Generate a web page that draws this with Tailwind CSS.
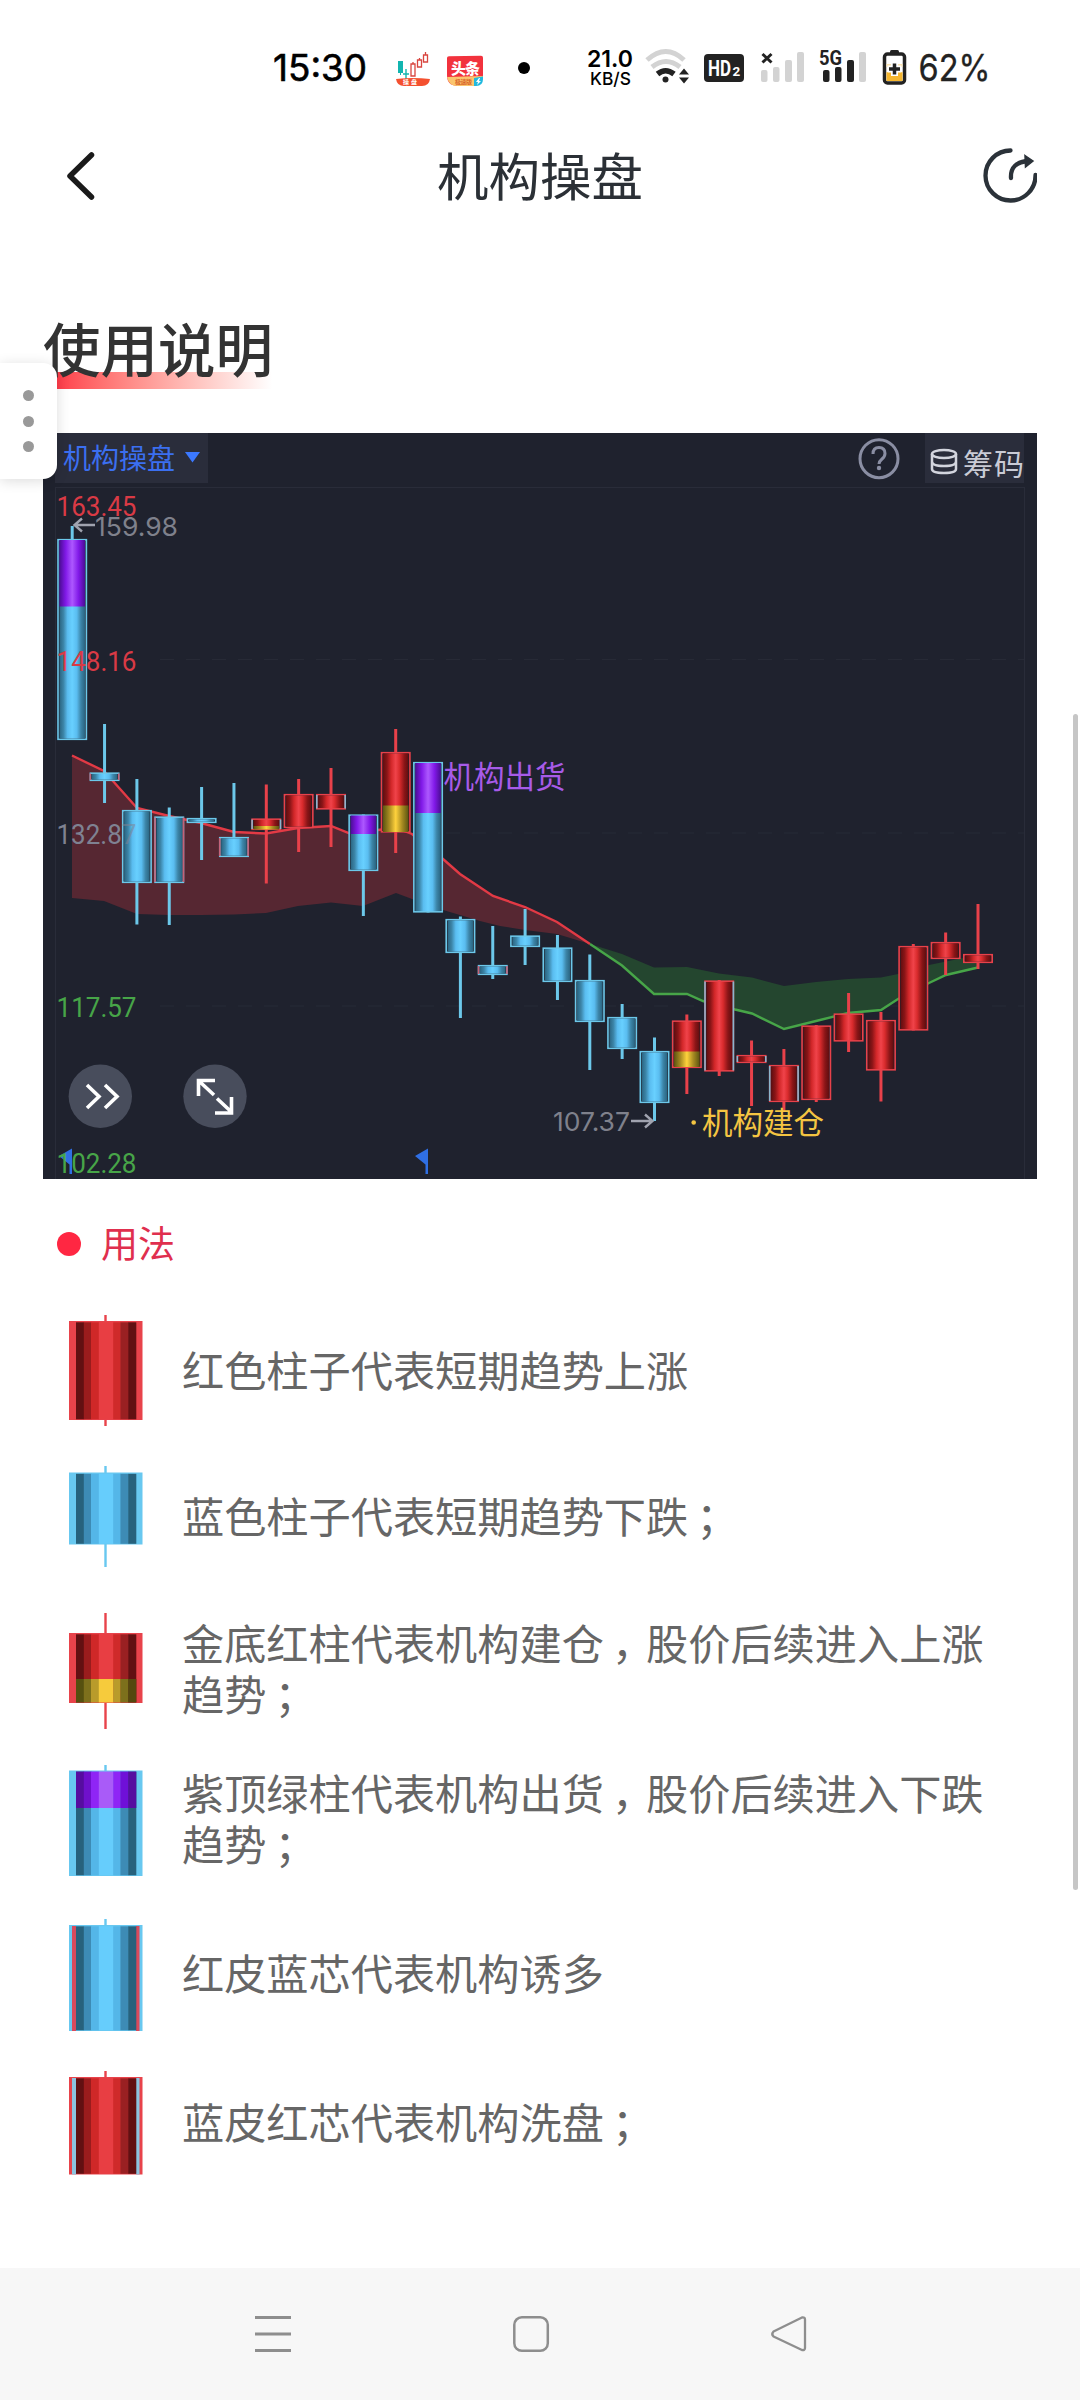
<!DOCTYPE html>
<html lang="zh-CN">
<head>
<meta charset="utf-8">
<title>机构操盘</title>
<script src="https://cdn.jsdelivr.net/npm/@tailwindcss/browser@4"></script>
</head>
<body class="bg-white">
<div class="relative flex h-[2400px] w-[1080px] flex-col overflow-hidden bg-white font-['Noto_Sans_CJK_SC',sans-serif]">

  <!-- status bar -->
  <div class="flex h-[130px] pl-[260px]">
    <svg class="h-[130px] w-[120px]" viewBox="260 0 120 130"><text x="273" y="81" font-family="Inter" font-weight="400" stroke="#000" stroke-width=".6" font-size="37" textLength="94" lengthAdjust="spacingAndGlyphs">15:30</text></svg>
    <svg class="h-[130px] w-[60px]" viewBox="380 0 60 130" fill="none">
      <path d="M398 61h5v12h-2v2h-1v-2h-2z" fill="#12b5b0"/>
      <path d="M406 69v11M403 74h6" stroke="#12b5b0" stroke-width="1.4"/>
      <path d="M411 64h4v12h-4zM413 62v2M417.500 60h4v7h-4zM419.500 58v2M423.500 55h4v7h-4zM425.500 52v3" stroke="#d9453f" stroke-width="1.3"/>
      <path d="M396 79q17-2 34 0q-1 7-8 7h-18q-7 0-8-7z" fill="#f4502f"/>
      <text x="403" y="84" font-size="6" font-weight="700" fill="#fff" textLength="14">操盘</text>
    </svg>
    <svg class="h-[130px] w-[60px]" viewBox="440 0 60 130">
      <path d="M447 58q0-1.500 2-1.700l32-.6q2 0 2 2v17q0 11-10 11h-16q-10 0-10-11z" fill="#f2323d"/>
      <path d="M447 77l36-1q-1 10-10 10h-16q-8 0-10-9z" fill="#fbc56e"/>
      <path d="M474 78l9-1.500V79q0 7-7 7h-2z" fill="#21b9df"/>
      <path d="M479 78l-3 4h2l-1 3 4-4h-2l1-3z" fill="#fff"/>
      <text x="451" y="73.500" font-size="15" font-weight="900" fill="#fff" textLength="29">头条</text>
      <text x="455" y="84" font-size="6" font-weight="700" fill="#d8662a" textLength="17">极速版</text>
    </svg>
    <svg class="h-[130px] w-[80px]" viewBox="500 0 80 130"><circle cx="524" cy="68" r="6"/></svg>
    <svg class="h-[130px] w-[62px]" viewBox="580 0 62 130" font-family="Inter" font-weight="500">
      <text x="587" y="67" font-size="23.500" font-weight="600" textLength="46" lengthAdjust="spacingAndGlyphs">21.0</text>
      <text x="590" y="84.500" font-size="17.500" textLength="41" lengthAdjust="spacingAndGlyphs">KB/S</text>
    </svg>
    <svg class="h-[130px] w-[52px]" viewBox="642 0 52 130" fill="none">
      <path d="M647 60q19-17 37 0" stroke="#d3d3d3" stroke-width="5"/>
      <path d="M652 67q14-11 28 0" stroke="#d3d3d3" stroke-width="5"/>
      <path d="M657.500 74q8-6.500 16.500 0" stroke="#222" stroke-width="5.500"/>
      <circle cx="665.500" cy="79.500" r="3" fill="#222"/>
      <path d="M684 68.500l5 6h-10zM684 83.500l5-6h-10z" fill="#222"/>
    </svg>
    <svg class="h-[130px] w-[60px]" viewBox="694 0 60 130">
      <rect x="704" y="54" width="40" height="28" rx="4" fill="#222"/>
      <text x="708" y="76" font-family="Roboto" font-weight="700" font-size="22" fill="#fff" textLength="23" lengthAdjust="spacingAndGlyphs">HD</text>
      <text x="732.500" y="76" font-family="Roboto" font-weight="700" font-size="13.500" fill="#fff">2</text>
    </svg>
    <svg class="h-[130px] w-[60px]" viewBox="754 0 60 130">
      <path d="M762.500 54l9 8.500M771.500 54l-9 8.500" stroke="#222" stroke-width="3"/>
      <g fill="#d3d3d3"><rect x="761" y="70" width="6.500" height="12" rx="2"/><rect x="773" y="67" width="6.500" height="15" rx="2"/><rect x="785" y="60" width="7" height="22" rx="2"/><rect x="797" y="52" width="7" height="30" rx="2"/></g>
    </svg>
    <svg class="h-[130px] w-[60px]" viewBox="814 0 60 130">
      <text x="819" y="64.500" font-family="Roboto" font-weight="700" font-size="20" fill="#222" textLength="23" lengthAdjust="spacingAndGlyphs">5G</text>
      <g fill="#222"><rect x="823" y="70" width="6.500" height="12" rx="2"/><rect x="835" y="67" width="6.500" height="15" rx="2"/><rect x="847" y="60" width="7" height="22" rx="2"/></g>
      <rect x="859" y="52" width="7" height="30" rx="2" fill="#d3d3d3"/>
    </svg>
    <svg class="h-[130px] w-[40px]" viewBox="874 0 40 130">
      <path d="M890 54v-2.500q0-1.500 1.500-1.500h6q1.500 0 1.500 1.500V54z" fill="#222"/>
      <rect x="884.500" y="54" width="20" height="29" rx="3" fill="#fff" stroke="#222" stroke-width="3.500"/>
      <path d="M886.500 64h16v3h-16z" fill="#fbe3b0"/><path d="M886.500 72h16v9h-16z" fill="#f5b62f"/>
      <path d="M894.500 62v14M887.500 69h14" stroke="#fff" stroke-width="7"/>
      <path d="M894.500 63.500v11M889 69h11" stroke="#222" stroke-width="3.500"/>
    </svg>
    <svg class="h-[130px] w-[100px]" viewBox="914 0 100 130"><text x="918.500" y="80.500" font-family="Inter" font-size="37" fill="#222" stroke="#222" stroke-width=".3" textLength="72" lengthAdjust="spacingAndGlyphs">62%</text></svg>
  </div>

  <!-- title bar -->
  <header class="flex h-[92px] items-center justify-between px-[43px]">
    <svg class="h-[60px] w-[60px]" viewBox="43 146 60 60" fill="none"><path d="M91.500 155L70 176l21.500 21" stroke="#1a1a1a" stroke-width="5.500" stroke-linecap="round" stroke-linejoin="round"/></svg>
    <h1 class="pb-1 text-[51.500px] leading-none text-[#2b3036]">机构操盘</h1>
    <svg class="h-[60px] w-[60px]" viewBox="977 146 60 60" fill="none" stroke="#2b3239" stroke-width="4.300" stroke-linecap="round">
      <path d="M1010.500 150.500A25 25 0 1 0 1035.500 175"/><path d="M1011 178q-1-16 18-17"/><path d="M1025 155.500l8 5.500-7.500 6z" fill="#2b3239" stroke-width="1.500"/>
    </svg>
  </header>

  <main class="flex h-[2046px] flex-col px-[43px] pt-[88px]">
    <h2 class="h-[123px]">
      <span class="inline-flex h-[79px] w-[229px] items-center whitespace-nowrap bg-linear-to-r from-[#ff1f3d] to-white bg-[length:100%_17px] bg-[position:0_62px] bg-no-repeat pb-1 text-[57.500px] leading-[75px] font-medium text-[#333]">使用说明</span>
    </h2>

    <!-- candlestick chart -->
    <svg id="chart" class="block h-[746px] w-[994px] shrink-0" viewBox="43 433 994 746" fill="none">
      <defs>
        <linearGradient id="r"><stop offset="0" stop-color="#5e0e10"/><stop offset=".16" stop-color="#8a1517"/><stop offset=".32" stop-color="#d22729"/><stop offset=".5" stop-color="#f0434a"/><stop offset=".65" stop-color="#d92b2d"/><stop offset=".84" stop-color="#8a1517"/><stop offset="1" stop-color="#5e0e10"/></linearGradient>
        <linearGradient id="b"><stop offset="0" stop-color="#2a6480"/><stop offset=".16" stop-color="#3c85a8"/><stop offset=".32" stop-color="#5abdf0"/><stop offset=".5" stop-color="#68d0ff"/><stop offset=".68" stop-color="#5abdf0"/><stop offset=".84" stop-color="#3c85a8"/><stop offset="1" stop-color="#2a6480"/></linearGradient>
        <linearGradient id="p"><stop offset="0" stop-color="#4b0d94"/><stop offset=".25" stop-color="#8119e8"/><stop offset=".5" stop-color="#ad58ff"/><stop offset=".75" stop-color="#8119e8"/><stop offset="1" stop-color="#4b0d94"/></linearGradient>
        <linearGradient id="g"><stop offset="0" stop-color="#5b5410"/><stop offset=".25" stop-color="#a88b22"/><stop offset=".5" stop-color="#ffd23c"/><stop offset=".75" stop-color="#a88b22"/><stop offset="1" stop-color="#5b5410"/></linearGradient>
      </defs>
      <path d="M43 433h994v746H43z" fill="#1f222e"/>
      <path d="M55 487.500h970M55.500 487v692M1024.500 487v692" stroke="#292c39"/>
      <path d="M160 659.500h864M160 833h864M160 1006h864" stroke="#272a36" stroke-dasharray="14 12"/>
      <path d="M55 433h153v50H55zM925 433h99v50h-99z" fill="#2a2d3b"/>
      <text x="63" y="469" font-size="28" fill="#3b6ff0" textLength="112">机构操盘</text>
      <path d="M185 452h15l-7.500 10.500z" fill="#3b78ff"/>
      <circle cx="879" cy="458.700" r="19" stroke="#8a8ea3" stroke-width="3"/>
      <path d="M873 454q0-6.500 6-6.500t6 6q0 3-3 5.500t-3 5" stroke="#8a8ea3" stroke-width="3"/><circle cx="879" cy="468" r="2.200" fill="#8a8ea3"/>
      <g stroke="#d3d5de" stroke-width="2.500"><ellipse cx="944" cy="454" rx="12" ry="4"/><path d="M932 454v15q0 4 12 4t12-4v-15M932 461.500q0 4.500 12 4.500t12-4.500"/></g>
      <text x="963" y="475" font-size="30" fill="#c9cbd5" textLength="61">筹码</text>

      <path d="M72 755.500L104 771 137 808 169 816 201 823 234 832 266 833.500 298 828 331 826 350 833.500 363 837 378 830 396 828 412 834 428 847 443 859 460 874 493 896 525 907 557 922 590 944 557 934 525 930 500 926 480 921 460 915 443 910 412 899 396 893 363 906 331 902.500 298 906 266 913 234 914.500 201 915 169 915 137 914 104 901 72 898z" fill="#562732"/>
      <path d="M590 944L622 954 654 967.500 687 967 719 973.500 752 977.500 784 986 816 982 848 979 881 977.500 898 974 929 965 946 961.500 978 955V967.500L946 975 929 983 898 999 881 1010 848 1013 816 1021 784 1029 752 1013.500 735 1009.500 703 1001 687 994H654L622 965.500z" fill="#24462f"/>
      <path d="M72 755.500L104 771 137 808 169 816 201 823 234 832 266 833.500 298 828 331 826 350 833.500 363 837 378 830 396 828 412 834 428 847 443 859 460 874 493 896 525 907 557 922 590 944" stroke="#e23a45" stroke-width="2.400"/>
      <path d="M590 944L622 965.500 654 994H687L703 1001 735 1009.500 752 1013.500 784 1029 816 1021 848 1013 881 1010 898 999 929 983 946 975 978 967.500" stroke="#47a548" stroke-width="2.400"/>
      <g id="candles"></g>

      <g font-family="Roboto" font-weight="400" font-size="28.500">
        <text x="56.500" y="515.500" fill="#d93a45" textLength="80" lengthAdjust="spacingAndGlyphs">163.45</text>
        <text x="56.500" y="671" fill="#d93a45" textLength="80" lengthAdjust="spacingAndGlyphs">148.16</text>
        <text x="56.500" y="844" fill="#7f8292" textLength="80" lengthAdjust="spacingAndGlyphs">132.8<tspan fill-opacity=".55">7</tspan></text>
        <text x="56.500" y="1017" fill="#47a548" textLength="80" lengthAdjust="spacingAndGlyphs">117.57</text>
      </g>
      <g font-family="Inter" font-size="26" fill="#7f818c">
        <text x="95" y="536" textLength="83" lengthAdjust="spacingAndGlyphs">159.98</text>
        <text x="553" y="1131" textLength="77" lengthAdjust="spacingAndGlyphs">107.37</text>
      </g>
      <path d="M95 525H75M82 518.500L74.500 525l7.500 6.500M631 1121h21M645 1114.500l7.500 6.500-7.500 6.500" stroke="#a0a3af" stroke-width="2.400"/>
      <text x="443.500" y="788" font-size="30.500" fill="#a75be8" textLength="122">机构出货</text>
      <circle cx="693.700" cy="1122.500" r="2.300" fill="#f4c542"/>
      <text x="702" y="1134" font-size="30.500" fill="#f4c542" textLength="122">机构建仓</text>

      <circle cx="100.300" cy="1096.300" r="31.700" fill="#484d5c"/><circle cx="215" cy="1096.300" r="31.700" fill="#484d5c"/>
      <path d="M87 1085l12 11.500-12 11.500M105 1085l12 11.500-12 11.500" stroke="#fff" stroke-width="3.600"/>
      <path d="M198.500 1096v-15.500H215M199 1081l15 14M217 1098.500l15 14M215 1113h16.500v-16" stroke="#fff" stroke-width="3.600"/>
      <path d="M72 1148.500V1174h-2.500v-9.500L59 1156zM428 1148.500V1174h-2.500v-9.500L415 1156z" fill="#2f6fe4"/>
      <text x="56.500" y="1173" font-family="Roboto" font-size="28.500" fill="#47a548" textLength="80" lengthAdjust="spacingAndGlyphs">102.28</text>
    </svg>

    <!-- usage legend -->
    <h3 class="flex h-[120px] items-center gap-[20px] pt-[9px] pl-[14px] text-[37px] leading-none text-[#e02f4e]"><span class="size-6 rounded-full bg-[#ff2742]"></span><span class="pb-[2px]">用法</span></h3>
    <ul class="flex flex-col text-[42.200px] leading-[51px] text-[#666]">
      <li class="flex h-[146px] items-center"><svg class="h-full w-[139px] shrink-0" viewBox="43 1299 139 146" data-key="r,69,1321,1420,1315,1426"></svg><p class="pb-[7px]">红色柱子代表短期趋势上涨</p></li>
      <li class="flex h-[146px] items-center"><svg class="h-full w-[139px] shrink-0" viewBox="43 1445 139 146" data-key="b,69,1472.500,1544.500,1466,1567"></svg><p class="pb-[7px]">蓝色柱子代表短期趋势下跌<span class="inline-block translate-x-[8px]">；</span></p></li>
      <li class="flex h-[159px] items-center"><svg class="h-full w-[139px] shrink-0" viewBox="43 1591 139 159" data-key="r,69,1633,1703,1613,1729,g,1679,1702.500"></svg><p class="pb-[7px]">金底红柱代表机构建仓<span class="inline-block translate-x-[8px]">，</span>股价后续进入上涨<br>趋势<span class="inline-block translate-x-[8px]">；</span></p></li>
      <li class="flex h-[141px] items-center"><svg class="h-full w-[139px] shrink-0" viewBox="43 1750 139 141" data-key="b,69,1770.500,1876,1765,1876,p,1771.500,1808"></svg><p class="pb-[7px]">紫顶绿柱代表机构出货<span class="inline-block translate-x-[8px]">，</span>股价后续进入下跌<br>趋势<span class="inline-block translate-x-[8px]">；</span></p></li>
      <li class="flex h-[166px] items-center"><svg class="h-full w-[139px] shrink-0" viewBox="43 1891 139 166" data-key="b,69,1925,2031,1919,2031,#d94a5c"></svg><p class="pb-[5px]">红皮蓝芯代表机构诱多</p></li>
      <li class="flex h-[132px] items-center"><svg class="h-full w-[139px] shrink-0" viewBox="43 2057 139 132" data-key="r,69,2077,2174.500,2071,2174,#8cc4e0"></svg><p class="pb-[6px]">蓝皮红芯代表机构洗盘<span class="inline-block translate-x-[8px]">；</span></p></li>
    </ul>
  </main>

  <!-- system navigation -->
  <nav class="flex h-[132px] shrink-0 items-center bg-[#f7f7f7] pl-[251px]">
    <svg class="h-11 w-11" viewBox="251 2312 44 44" stroke="#8e8e8e" stroke-width="3"><path d="M255 2317.500h36M255 2334h36M255 2350.500h36"/></svg>
    <svg class="ml-[214px] h-11 w-11" viewBox="509 2312 44 44" fill="none" stroke="#8e8e8e" stroke-width="2.500"><rect x="514.300" y="2317.300" width="33.500" height="33.500" rx="7.500"/></svg>
    <svg class="ml-[214px] h-11 w-11" viewBox="767 2312 44 44" fill="none" stroke="#8e8e8e" stroke-width="2.300" stroke-linejoin="round"><path d="M802 2317.500L773.500 2331.500Q771 2334 773.500 2336.500L802 2350Q805 2350.500 805 2348V2319.500Q805 2317 802 2317.500z"/></svg>
  </nav>

  <!-- floating side handle -->
  <div class="absolute top-[363px] left-0 flex h-[116px] w-[57px] flex-col items-center justify-center gap-[14.500px] rounded-r-[14px] bg-white shadow-[0_2px_14px_rgba(0,0,0,0.14)]">
    <i class="size-[11px] rounded-full bg-[#999]"></i><i class="size-[11px] rounded-full bg-[#999]"></i><i class="size-[11px] rounded-full bg-[#999]"></i>
  </div>
  <!-- scroll thumb -->
  <div class="absolute top-[714px] left-[1073px] h-[1176px] w-[5px] rounded-full bg-[#c6c6c6]"></div>
</div>

<script>
const RED = '#e8414a', BLUE = '#6cc8ea';
const rect = (x, y, w, h, f, s) => `<rect x="${x}" y="${y}" width="${w}" height="${h}" fill="${f}"${s ? ` stroke="${s}" stroke-width="1.6"` : ''}/>`;
// colour, wick top, body top, body bottom, wick bottom, [cap fill, from, to], contrasting sides
const data = [
  ['b',526,539,740,740,['p',540,606.5]],['b',724,772.5,781,803,0,1],['b',779,810,883,924.5],['b',807.5,816.5,883,925,0,1],
  ['b',787,818,823,860],['b',783,837,857,857,0,1],['r',784.5,818.5,830,883.5,['g',826,829.5],1],['r',779,794,828,852],
  ['r',768,794,809.5,847,0,1],['b',814.5,814.5,871,916,['p',815.5,834]],['r',729,752,832.5,853,['g',805.5,832]],['b',762,762,912.5,912.5,['p',763,813]],
  ['b',916.5,919,953,1018],['b',926,965,975,979,0,1],['b',909,935.5,947,965],['b',935,947.5,982,1000],['b',954.5,980,1022,1070],
  ['b',1004,1017,1049,1059],['b',1037.5,1051,1103,1121],['r',1014.5,1020.5,1068,1094,['g',1051.5,1067]],['r',980,980.5,1071.5,1076,0,1],
  ['r',1040.5,1055,1063,1106,0,1],['r',1049,1065,1102,1112,0,1],['r',1025,1025.5,1100,1102],['r',993,1013.5,1041.5,1052],
  ['r',1012,1020,1070.5,1101.5],['r',944,946,1030.5,1030.5],['r',932.5,942,959,975],['r',904,954,963,969]
];
document.getElementById('candles').innerHTML = data.map(([c, wt, t, b, wb, cap, sides], i) => {
  const x = 72.2 + i * 32.35, line = c === 'r' ? RED : BLUE;
  let s = rect(x - 1.5, wt, 3, wb - wt, line);
  s += rect(x - 14.2, t + .7, 28.4, b - t - 1.4, '#1f222e', line);
  s += rect(x - 12.8, t + 1.4, 25.6, b - t - 2.8, `url(#${c})`);
  if (cap) s += rect(x - 12.8, cap[1], 25.6, cap[2] - cap[1], `url(#${cap[0]})`);
  if (sides) { const k = c === 'r' ? '#8cb4cc' : '#c4637a'; s += rect(x - 15, t + 1, 1.6, b - t - 2, k) + rect(x + 13.4, t + 1, 1.6, b - t - 2, k); }
  return s;
}).join('');

const bands = {
  r: ['#611012','#9a1c1d','#cf2828','#e83e43','#cf2a2a','#9a2022','#611012'],
  b: ['#27617c','#3d8bb5','#54b6e8','#66cdfc','#54b6e8','#3d8bb5','#27617c'],
  p: ['#560da0','#6f10cc','#8f25f5','#a95bf8','#8f25f5','#6f10d8','#560da0'],
  g: ['#55500f','#7d701c','#b99b2b','#f6cb3c','#b99b2b','#7d701c','#55480f']
};
const edges = [0, .13, .25, .38, .62, .74, .87, 1];
const banded = (c, y, h) => bands[c].map((f, i) => rect(76 + 60 * edges[i], y, 60 * (edges[i + 1] - edges[i]) + .3, h, f)).join('');
document.querySelectorAll('[data-key]').forEach(el => {
  const k = el.dataset.key.split(','), c = k[0], [x, t, b, wt, wb] = k.slice(1, 6).map(Number), line = c === 'r' ? '#e8434b' : '#68c8f0';
  let s = rect(104.3, wt, 2.4, wb - wt, line) + rect(x, t, 73.5, b - t, line);
  if (k[6] && k[6][0] === '#') s += rect(72, t + 1, 4, b - t - 1, k[6]) + rect(136, t + 1, 3.5, b - t - 1, k[6]);
  s += banded(c, t + 1.3, b - t - 2);
  if (k[7]) s += banded(k[6], +k[7], k[8] - k[7]);
  el.innerHTML = s;
});
</script>
</body>
</html>
